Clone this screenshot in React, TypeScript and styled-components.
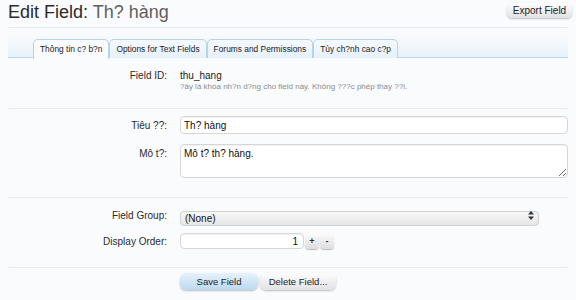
import React from "react";
import styled, { createGlobalStyle, css } from "styled-components";

const GlobalStyle = createGlobalStyle`
  html, body {
    margin: 0;
    padding: 0;
    background: #fafbfd;
    font-family: "Liberation Sans", Arial, sans-serif;
    color: #222;
  }
  * {
    box-sizing: border-box;
  }
`;

// layout
const Page = styled.div`
  width: 576px;
  height: 300px;
  overflow: hidden;
`;
const TitleBar = styled.div`
  display: flex;
  justify-content: space-between;
  align-items: flex-start;
  height: 27px;
  margin: 0 4px 0 8px;
`;
const Title = styled.h1`
  margin: 0;
  font-size: 18px;
  font-weight: normal;
  line-height: 25px;
  color: #2b2b2b;
  span {
    color: #5f5f5f;
  }
`;
const Rule = styled.div`
  margin: 0 8px;
  height: 1px;
  background: #e2edf6;
`;
const Content = styled.div`
  margin: 0 8px;
`;

// tabs
const TabStrip = styled.div`
  display: flex;
  height: 30px;
  padding: 11px 0 0 25px;
  border-bottom: 1px solid #b6d6ee;
  background: linear-gradient(to bottom, #fafbfd 0%, #f6f9fc 40%, #e7f1fa 100%);
  border-top-left-radius: 6px;
`;
const Tab = styled.div<{ $active?: boolean }>`
  height: 19px;
  padding: 0 6px;
  font-size: 8.4px;
  line-height: 18px;
  color: #222;
  border: 1px solid #b4d4ec;
  border-bottom: none;
  border-radius: 5px 5px 0 0;
  white-space: nowrap;
  background: linear-gradient(to bottom, #f6fafd, #e6f1fa);
  ${(p) =>
    p.$active &&
    css`
      height: 20px;
      margin-bottom: -1px;
      background: #fafbfd;
    `}
`;

// form
const Block = styled.div<{ $pad: string; $last?: boolean }>`
  padding: ${(p) => p.$pad};
  border-bottom: ${(p) => (p.$last ? "none" : "1px solid #e3edf5")};
  display: flex;
  flex-direction: column;
  gap: ${(p) => (p.$last ? "0" : "10px")};
`;
const Row = styled.div<{ $top?: boolean }>`
  display: flex;
  align-items: ${(p) => (p.$top ? "flex-start" : "center")};
  gap: 13px;
`;
const Label = styled.div<{ $pt?: number }>`
  width: 159px;
  flex: none;
  text-align: right;
  font-size: 10px;
  line-height: 13px;
  color: #2a2a2a;
  padding-top: ${(p) => p.$pt ?? 0}px;
`;
const Value = styled.div`
  display: flex;
  flex-direction: column;
`;
const StaticText = styled.div`
  font-size: 10px;
  line-height: 13px;
  color: #222;
`;
const Explain = styled.div`
  font-size: 8px;
  line-height: 10px;
  color: #8c8c8c;
`;
const fieldBox = css`
  border: 1px solid #d6d6d6;
  border-radius: 4px;
  background: #fff;
  box-shadow: inset 0 1px 1px rgba(0, 0, 0, 0.06);
  font-family: "Liberation Sans", Arial, sans-serif;
  font-size: 10px;
  color: #111;
  outline: none;
`;
const TextInput = styled.input<{ $w: number; $h: number; $right?: boolean }>`
  ${fieldBox};
  width: ${(p) => p.$w}px;
  height: ${(p) => p.$h}px;
  padding: 0 ${(p) => (p.$right ? "5px" : "3px")} 0 3px;
  text-align: ${(p) => (p.$right ? "right" : "left")};
`;
const TextArea = styled.textarea`
  ${fieldBox};
  width: 393px;
  height: 34px;
  padding: 3px 3px;
  resize: vertical;
  line-height: 12px;
  display: block;
`;
const SelectWrap = styled.div`
  position: relative;
  width: 359px;
  height: 15px;
`;
const Select = styled.select`
  appearance: none;
  width: 100%;
  height: 100%;
  border: 1px solid #d0d0d0;
  border-radius: 4px;
  background: linear-gradient(to bottom, #f8f8f8, #e6e6e6);
  font-family: "Liberation Sans", Arial, sans-serif;
  font-size: 10px;
  color: #111;
  padding: 0 4px;
  outline: none;
`;
const SelectArrows = styled.svg`
  position: absolute;
  right: 5px;
  top: 3px;
  pointer-events: none;
`;
const Spinner = styled.div`
  display: flex;
  align-items: center;
  gap: 1px;
`;
const SpinButton = styled.button`
  width: 14px;
  height: 15px;
  padding: 0;
  border: none;
  border-radius: 4px;
  background: linear-gradient(to bottom, #fbfbfb, #dcdcdc);
  box-shadow: 0 1px 1px rgba(0, 0, 0, 0.25);
  font-family: "Liberation Sans", Arial, sans-serif;
  font-size: 9px;
  font-weight: bold;
  color: #333;
  line-height: 15px;
`;
const ButtonRow = styled.div`
  display: flex;
  gap: 2px;
  padding-left: 172px;
`;
const Button = styled.button<{ $primary?: boolean; $w: number }>`
  width: ${(p) => p.$w}px;
  height: 17px;
  padding: 0;
  border: none;
  border-radius: 6px;
  font-family: "Liberation Sans", Arial, sans-serif;
  font-size: 9.5px;
  color: #222;
  box-shadow: 0 1px 2px rgba(0, 0, 0, 0.25);
  background: ${(p) =>
    p.$primary
      ? "linear-gradient(to bottom, #e6f2fc, #bcd8ef)"
      : "linear-gradient(to bottom, #fdfdfd, #e2e2e2)"};
`;
const ExportButton = styled(Button)`
  height: 15px;
  margin-top: 3px;
  font-size: 10px;
  border-radius: 5px;
`;

const tabs = ["Thông tin c? b?n", "Options for Text Fields", "Forums and Permissions", "Tùy ch?nh cao c?p"];

export default function App() {
  return (
    <Page>
      <GlobalStyle />
      <TitleBar>
        <Title>
          Edit Field: <span>Th? hàng</span>
        </Title>
        <ExportButton $w={65}>Export Field</ExportButton>
      </TitleBar>
      <Rule />
      <Content>
        <TabStrip>
          {tabs.map((t, i) => (
            <Tab key={t} $active={i === 0}>
              {t}
            </Tab>
          ))}
        </TabStrip>

        <Block $pad="11px 0 16px">
          <Row $top>
            <Label>Field ID:</Label>
            <Value>
              <StaticText>thu_hang</StaticText>
              <Explain>?ây là khóa nh?n d?ng cho field này. Không ???c phép thay ??i.</Explain>
            </Value>
          </Row>
        </Block>

        <Block $pad="7px 0 19px">
          <Row>
            <Label>Tiêu ??:</Label>
            <TextInput $w={393} $h={18} defaultValue="Th? hàng" />
          </Row>
          <Row $top>
            <Label $pt={3}>Mô t?:</Label>
            <TextArea defaultValue="Mô t? th? hàng." />
          </Row>
        </Block>

        <Block $pad="10px 0 18px">
          <Row>
            <Label>Field Group:</Label>
            <SelectWrap>
              <Select defaultValue="none">
                <option value="none">(None)</option>
              </Select>
              <SelectArrows width="6" height="9" viewBox="0 0 6 9">
                <path d="M3 0 L6 3.5 L0 3.5 Z" fill="#333" />
                <path d="M3 9 L6 5.5 L0 5.5 Z" fill="#333" />
              </SelectArrows>
            </SelectWrap>
          </Row>
          <Row>
            <Label>Display Order:</Label>
            <Spinner>
              <TextInput $w={124} $h={16} $right defaultValue="1" />
              <SpinButton>+</SpinButton>
              <SpinButton>-</SpinButton>
            </Spinner>
          </Row>
        </Block>

        <Block $pad="5px 0 0" $last>
          <ButtonRow>
            <Button $primary $w={78}>
              Save Field
            </Button>
            <Button $w={76}>Delete Field...</Button>
          </ButtonRow>
        </Block>
      </Content>
    </Page>
  );
}
